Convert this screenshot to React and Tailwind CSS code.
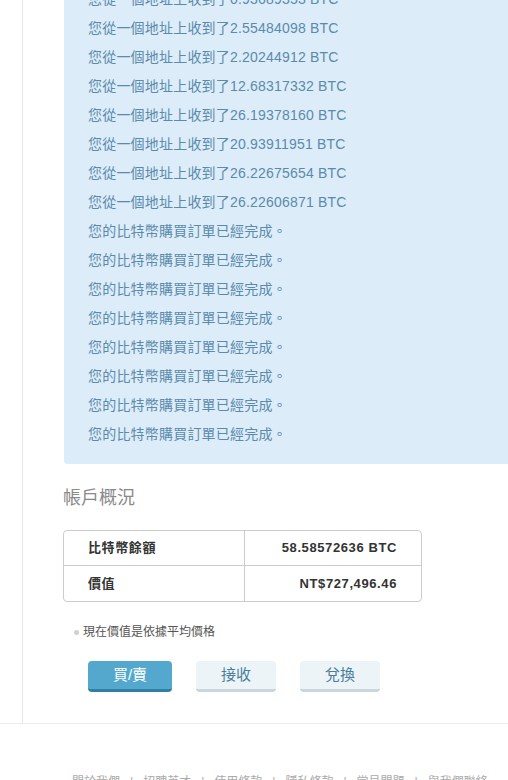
import React from "react";

const received = [
  "0.93689353",
  "2.55484098",
  "2.20244912",
  "12.68317332",
  "26.19378160",
  "20.93911951",
  "26.22675654",
  "26.22606871",
];

const footerLinks = ["關於我們", "招聘英才", "使用條款", "隱私條款", "常見問題", "與我們聯絡"];

const App = () => {
  const messages = [
    ...received.map((v) => `您從一個地址上收到了${v} BTC`),
    ...Array(8).fill("您的比特幣購買訂單已經完成。"),
  ];

  return (
    <div className="w-[508px] h-[780px] overflow-hidden bg-white font-['Liberation_Sans','Noto_Sans_CJK_TC',sans-serif]">
      <div className="ml-[22px] -mt-[15px] border-l border-[#e8e8e8] pl-[40px] pb-[31px]">
        <div className="ml-[1px] w-[600px] rounded-b-[4px] bg-[#dcedf9] pl-[24px] pb-[15px]">
          {messages.map((m, i) => (
            <div key={i} className="h-[29px] leading-[29px] text-[14px] tracking-[0.2px] text-[#5b8aab] whitespace-nowrap">
              {m}
            </div>
          ))}
        </div>

        <h2 className="mt-[22px] text-[18px] leading-[24px] text-[#8a8a8a]">帳戶概況</h2>

        <div className="mt-[20px] w-[359px] rounded-[4px] border border-[#cccccc] text-[13px] font-bold tracking-[0.6px] text-[#333]">
          <div className="flex h-[35px] items-center border-b border-[#cccccc]">
            <div className="w-[181px] h-full flex items-center border-r border-[#cccccc] pl-[24px]">比特幣餘額</div>
            <div className="flex-1 text-right pr-[24px]">58.58572636 BTC</div>
          </div>
          <div className="flex h-[35px] items-center">
            <div className="w-[181px] h-full flex items-center border-r border-[#cccccc] pl-[24px]">價值</div>
            <div className="flex-1 text-right pr-[24px]">NT$727,496.46</div>
          </div>
        </div>

        <div className="mt-[22px] flex items-center pl-[11px] text-[12px] leading-[16px] text-[#555]">
          <span className="mr-[4px] inline-block h-[5px] w-[5px] rounded-full bg-[#d0d0d0]" />
          現在價值是依據平均價格
        </div>

        <div className="mt-[21px] ml-[25px] flex gap-[24px]">
          <button className="h-[31px] w-[84px] rounded-[4px] border-b-[3px] border-[#2f7fa3] bg-[#55a8cd] text-[15px] text-white">
            買/賣
          </button>
          <button className="h-[31px] w-[80px] rounded-[4px] border-b-[3px] border-[#c8d6de] bg-[#edf4f8] text-[15px] text-[#4b7f9c]">
            接收
          </button>
          <button className="h-[31px] w-[80px] rounded-[4px] border-b-[3px] border-[#c8d6de] bg-[#edf4f8] text-[15px] text-[#4b7f9c]">
            兌換
          </button>
        </div>
      </div>

      <div className="border-t border-[#ececec] pt-[51px] pl-[72px] flex items-center whitespace-nowrap text-[12px] leading-[14px] text-[#aaaaaa]">
        {footerLinks.map((l, i) => (
          <React.Fragment key={l}>
            {i > 0 && <span className="mx-[10px]">|</span>}
            <span>{l}</span>
          </React.Fragment>
        ))}
      </div>
    </div>
  );
};

export default App;
